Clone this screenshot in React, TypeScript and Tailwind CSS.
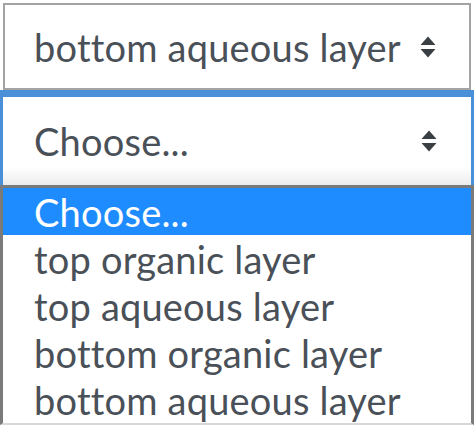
import React from "react";

const options = [
  "Choose...",
  "top organic layer",
  "top aqueous layer",
  "bottom organic layer",
  "bottom aqueous layer",
];

const SortIcon = () => (
  <svg width="18" height="24" viewBox="0 0 18 24" className="shrink-0">
    <path d="M9 1.5 L16.5 10 H1.5 Z" fill="#3a3f44" />
    <path d="M9 22.5 L16.5 14 H1.5 Z" fill="#3a3f44" />
  </svg>
);

export default function App() {
  return (
    <div
      className="w-[474px] h-[427px] overflow-hidden bg-white text-[38px] tracking-[0.2px] text-[#4a5058]"
      style={{ fontFamily: "Lato, 'Noto Sans', sans-serif" }}
    >
      <div className="pt-[3px] px-[3px]">
        <div className="h-[87px] border-2 border-[#a3a3a3] flex items-center justify-between pl-[29px] pr-[32px]">
          <span className="leading-none">bottom aqueous layer</span>
          <SortIcon />
        </div>
      </div>

      <div className="border-t-[7px] border-x-[3px] border-[#4a90d9]">
        <div className="h-[88px] bg-gradient-to-b from-white from-80% to-[#ececec] flex items-center justify-between pl-[31px] pr-[33px]">
          <span className="leading-none">Choose...</span>
          <SortIcon />
        </div>
      </div>

      <div className="border-t-[3px] border-x-[3px] border-b-2 border-x-[#7a7a7a] border-t-[#7a7a7a] border-b-[#d8d8d8] bg-white">
        {options.map((o, i) => (
          <div
            key={o}
            className={`h-[47px] flex items-center pl-[31px] leading-none ${
              i === 0 ? "bg-[#1e8cff] text-white" : ""
            }`}
          >
            {o}
          </div>
        ))}
      </div>
    </div>
  );
}
